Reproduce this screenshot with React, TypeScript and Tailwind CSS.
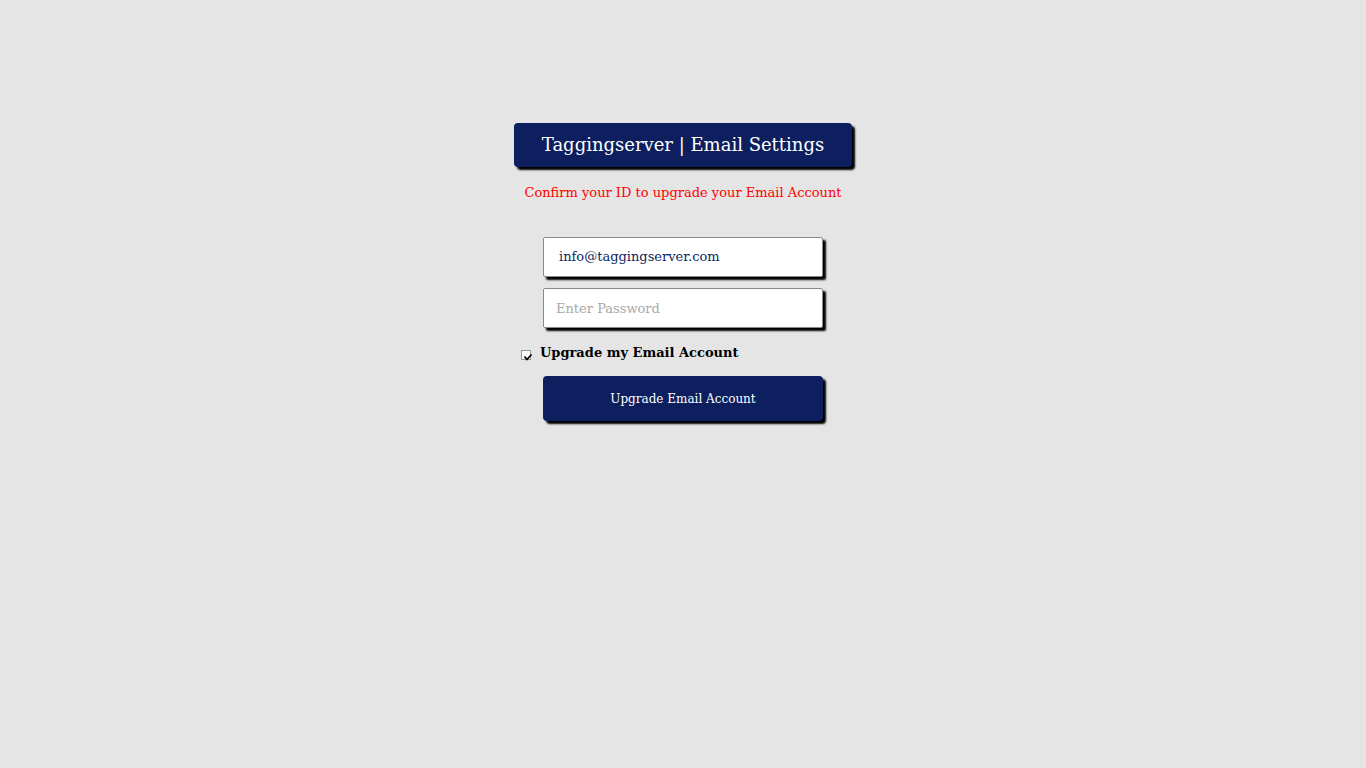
import React, { useState } from 'react';

const App: React.FC = () => {
  const [checked, setChecked] = useState(true);

  return (
    <div className="min-h-screen bg-[#e5e5e5] font-['DejaVu_Serif',serif]">
      <div className="mx-auto w-[338px] pt-[123px] flex flex-col items-center">
        <div className="w-[338px] h-[44px] pb-[2px] bg-[#0d1f5e] rounded-[4px] shadow-[3px_3px_2px_#000] flex items-center justify-center text-white text-[18px]">
          Taggingserver | Email Settings
        </div>
        <p className="mt-[17px] text-[#ff0000] text-[13px] leading-[18px]">
          Confirm your ID to upgrade your Email Account
        </p>

        <form className="mt-[35px] w-[280px] flex flex-col" onSubmit={e => e.preventDefault()}>
          <input
            type="email"
            defaultValue="info@taggingserver.com"
            className="h-[40px] w-[280px] pb-[2px] bg-white border border-[#8a8a8a] rounded-[2px] shadow-[3px_3px_2px_#000] pl-[15px] text-[13px] text-[#0d1f5e] outline-none font-['DejaVu_Serif',serif]"
          />
          <input
            type="password"
            placeholder="Enter Password"
            className="mt-[11px] h-[40px] w-[280px] bg-white border border-[#8a8a8a] rounded-[2px] shadow-[3px_3px_2px_#000] pl-[12px] text-[13px] text-[#0d1f5e] placeholder:text-[#a9a9a9] outline-none font-['DejaVu_Serif',serif]"
          />

          <label className="mt-[16px] -ml-[22px] flex items-center cursor-pointer select-none">
            <span
              onClick={() => setChecked(!checked)}
              className="mt-[3px] w-[10px] h-[10px] bg-white border border-[#9a9a9a] relative"
            >
              {checked && (
                <svg viewBox="0 0 10 10" className="absolute left-[1px] top-[1px] w-[10px] h-[10px]">
                  <path d="M1.5 4.5 L4 7.5 L8.5 2.5" fill="none" stroke="#000" strokeWidth="1.8" />
                </svg>
              )}
            </span>
            <span className="ml-[9px] text-[13px] font-bold text-black leading-[18px]">Upgrade my Email Account</span>
          </label>

          <button
            type="submit"
            className="mt-[14px] h-[45px] w-[280px] bg-[#0d1f5e] rounded-[4px] shadow-[3px_3px_2px_#000] text-white text-[12px] font-['DejaVu_Serif',serif]"
          >
            Upgrade Email Account
          </button>
        </form>
      </div>
    </div>
  );
};

export default App;
